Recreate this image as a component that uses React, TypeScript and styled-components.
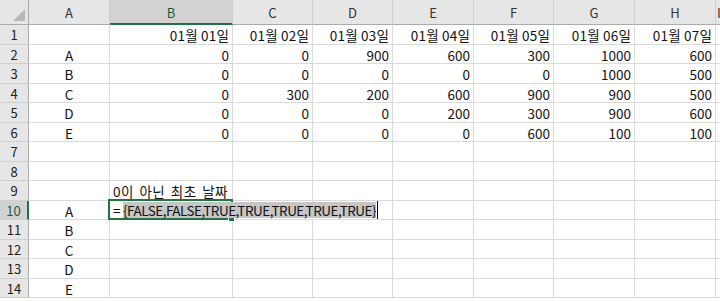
import React from 'react';
import styled, { createGlobalStyle, css } from 'styled-components';

const GlobalStyle = createGlobalStyle`
  html, body {
    margin: 0;
    padding: 0;
    background: #fff;
    overflow: hidden;
  }
  body {
    font-family: "Noto Sans CJK KR", "Noto Sans", sans-serif;
  }
`;

const columns = ['A', 'B', 'C', 'D', 'E', 'F', 'G', 'H', 'I'];
const colWidths = [29, 81, 123, 80, 80, 81, 80, 81, 81];
const rowHeights = [20, 19, 20, 19, 20, 19, 20, 19, 20, 19, 20, 19, 20, 19];

const dates = ['01월 01일', '01월 02일', '01월 03일', '01월 04일', '01월 05일', '01월 06일', '01월 07일'];

const data: Record<number, { label: string; values: number[] }> = {
  2: { label: 'A', values: [0, 0, 900, 600, 300, 1000, 600] },
  3: { label: 'B', values: [0, 0, 0, 0, 0, 1000, 500] },
  4: { label: 'C', values: [0, 300, 200, 600, 900, 900, 500] },
  5: { label: 'D', values: [0, 0, 0, 200, 300, 900, 600] },
  6: { label: 'E', values: [0, 0, 0, 0, 600, 100, 100] },
};

const lowerLabels: Record<number, string> = { 10: 'A', 11: 'B', 12: 'C', 13: 'D', 14: 'E' };

const GREEN = '#217346';

const App = () => {
  const renderRow = (r: number) => {
    const cells: React.ReactNode[] = [];
    const active = r === 10;
    cells.push(
      <RowHeader key="h" $active={active}>
        {r}
      </RowHeader>
    );
    for (let c = 0; c < 8; c++) {
      let content: React.ReactNode = null;
      let align: 'left' | 'center' | 'right' = 'right';
      if (r === 1 && c > 0) content = <DateText>{dates[c - 1]}</DateText>;
      if (data[r]) {
        if (c === 0) {
          content = data[r].label;
          align = 'center';
        } else content = data[r].values[c - 1];
      }
      if (lowerLabels[r] && c === 0) {
        content = lowerLabels[r];
        align = 'center';
      }
      if (r === 9 && c === 1) {
        content = <Caption>0이 아닌 최초 날짜</Caption>;
        align = 'left';
      }
      if (r === 10 && c === 1) {
        cells.push(
          <Cell key={c} $align="left" $raised>
            <SelectionFrame>
              <FillHandle />
            </SelectionFrame>
            <Editor>
              =<Highlight>{'{FALSE,FALSE,TRUE,TRUE,TRUE,TRUE,TRUE}'}</Highlight>
              <Caret />
            </Editor>
          </Cell>
        );
        continue;
      }
      cells.push(
        <Cell key={c} $align={align}>
          {content}
        </Cell>
      );
    }
    cells.push(<Cell key="i" $align="left" />);
    return <React.Fragment key={r}>{cells}</React.Fragment>;
  };

  return (
    <>
      <GlobalStyle />
      <Sheet>
        <Corner>
          <CornerMark />
        </Corner>
        {columns.map((col) => (
          <ColHeader key={col} $active={col === 'B'}>
            {col}
          </ColHeader>
        ))}
        {rowHeights.map((_, i) => renderRow(i + 1))}
      </Sheet>
    </>
  );
};

export default App;

const Sheet = styled.div`
  display: grid;
  grid-template-columns: ${colWidths.map((w) => `${w}px`).join(' ')} 1fr;
  grid-template-rows: 25px ${rowHeights.map((h) => `${h}px`).join(' ')};
  width: 720px;
  height: 301px;
  overflow: hidden;
  font-size: 13.5px;
  color: #111;
`;

const headerBase = css`
  box-sizing: border-box;
  background: #e6e6e6;
  display: flex;
  align-items: center;
  justify-content: center;
  font-size: 13px;
  color: #333;
`;

const Corner = styled.div`
  ${headerBase};
  position: relative;
  border-right: 1px solid #ababab;
  border-bottom: 1px solid #ababab;
`;

const CornerMark = styled.div`
  position: absolute;
  right: 3px;
  bottom: 3px;
  width: 0;
  height: 0;
  border-left: 12px solid transparent;
  border-bottom: 12px solid #b7b7b7;
`;

const ColHeader = styled.div<{ $active?: boolean }>`
  ${headerBase};
  border-right: 1px solid #cfcfcf;
  border-bottom: 1px solid #ababab;
  padding-top: 1px;
  ${(p) =>
    p.$active &&
    css`
      background: #d2d2d2;
      color: #1b5e37;
      border-bottom: 2px solid ${GREEN};
    `}
`;

const RowHeader = styled.div<{ $active?: boolean }>`
  ${headerBase};
  border-right: 1px solid #ababab;
  border-bottom: 1px solid #d0d0d0;
  color: #222;
  ${(p) =>
    p.$active &&
    css`
      background: #d2d2d2;
      color: #1b5e37;
      border-right: 2px solid ${GREEN};
    `}
`;

const Cell = styled.div<{ $align: 'left' | 'center' | 'right'; $raised?: boolean }>`
  box-sizing: border-box;
  position: relative;
  border-right: 1px solid #dadada;
  border-bottom: 1px solid #dadada;
  display: flex;
  align-items: center;
  white-space: nowrap;
  padding: 1px 3px 0 3px;
  justify-content: ${(p) =>
    p.$align === 'left' ? 'flex-start' : p.$align === 'center' ? 'center' : 'flex-end'};
  ${(p) => p.$raised && 'z-index: 2;'}
`;

const DateText = styled.span`
  letter-spacing: 0.2px;
`;

const Caption = styled.span`
  letter-spacing: 0.5px;
  word-spacing: 2px;
`;

const SelectionFrame = styled.div`
  position: absolute;
  left: -2px;
  top: -2px;
  right: -1px;
  bottom: -1px;
  border: 2px solid ${GREEN};
  pointer-events: none;
`;

const FillHandle = styled.div`
  position: absolute;
  right: -4px;
  bottom: -4px;
  width: 5px;
  height: 5px;
  background: ${GREEN};
  border: 1px solid #fff;
`;

const Editor = styled.div`
  position: absolute;
  left: 1px;
  top: 1px;
  width: 281px;
  height: 16px;
  background: #fff;
  display: flex;
  align-items: center;
  padding-left: 2px;
  box-sizing: border-box;
  z-index: 3;
  color: #111;
  letter-spacing: -0.5px;
`;

const Highlight = styled.span`
  background: #c6c6c6;
  margin-left: 3px;
  line-height: 16px;
`;

const Caret = styled.span`
  display: inline-block;
  width: 1px;
  height: 18px;
  margin-left: 1px;
  background: #000;
`;
